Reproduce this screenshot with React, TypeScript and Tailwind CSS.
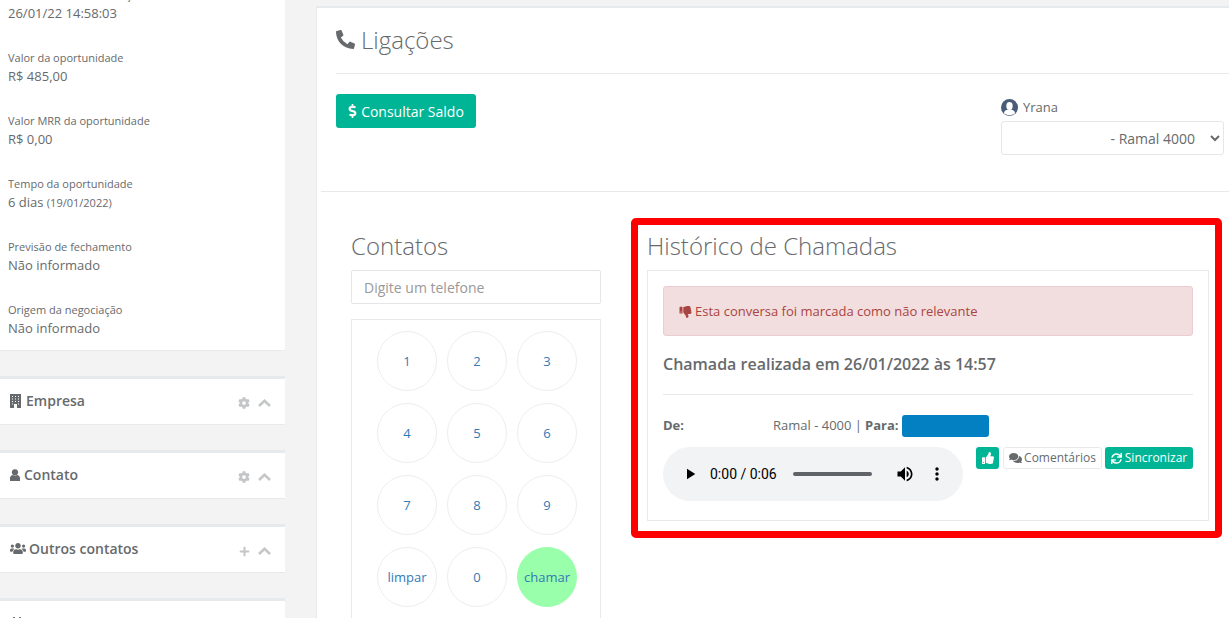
import { FaCalendarAlt, FaCog, FaComments, FaDollarSign, FaPhoneAlt, FaPlus, FaSync, FaThumbsDown, FaThumbsUp, FaUsers } from 'react-icons/fa'
import type { ReactNode } from 'react'

const fields: { label: string; value: ReactNode }[] = [
  { label: 'Data de última atualização', value: '26/01/22 14:58:03' },
  { label: 'Valor da oportunidade', value: 'R$ 485,00' },
  { label: 'Valor MRR da oportunidade', value: 'R$ 0,00' },
  { label: 'Tempo da oportunidade', value: <>6 dias <small className="text-[11px]">(19/01/2022)</small></> },
  { label: 'Previsão de fechamento', value: 'Não informado' },
  { label: 'Origem da negociação', value: 'Não informado' },
]

const keys = ['1', '2', '3', '4', '5', '6', '7', '8', '9', 'limpar', '0', 'chamar']

function BuildingIcon() {
  return (
    <svg className="mr-[1px] h-[14px] w-[11px]" viewBox="0 0 11 14">
      <rect width="11" height="14" fill="#676a6c" />
      <path d="M2 2h1v1H2zM5 2h1v1H5zM8 2h1v1H8zM2 4.500h1v1H2zM5 4.500h1v1H5zM8 4.500h1v1H8zM2 7h1v1H2zM5 7h1v1H5zM8 7h1v1H8zM2 9.500h1v1H2zM8 9.500h1v1H8zM4 10h3v4H4z" fill="#fff" />
    </svg>
  )
}

function BustIcon() {
  return (
    <svg className="h-[12px] w-[10px]" viewBox="0 0 10 12" fill="#676a6c">
      <circle cx="5" cy="3.300" r="3.100" />
      <path d="M0 12V9.200C0 7.400 1.300 6.300 3 6.100c1.200.8 2.800.8 4 0 1.700.2 3 1.300 3 3.100V12z" />
    </svg>
  )
}

function Chevron() {
  return (
    <svg className="h-[8px] w-[13px]" viewBox="0 0 13 8" fill="none" stroke="currentColor" strokeWidth="2.600">
      <path d="M1 7l5.500-5.200L12 7" />
    </svg>
  )
}

function Section({ icon, title, action }: { icon: ReactNode; title?: string; action: ReactNode }) {
  return (
    <section className="mt-[25px] flex h-[49px] items-center justify-between border-t-[3px] border-b border-[#e7eaec] bg-white pl-[10px] pr-[14px]">
      <h5 className="mb-[2px] flex items-center gap-[4px] text-[14px] font-semibold text-[#676a6c]">
        {icon}
        {title}
      </h5>
      <div className="mt-[3px] flex items-center gap-[8px] text-[#c4c6c8]">
        {action}
        <Chevron />
      </div>
    </section>
  )
}

function AudioBar() {
  return (
    <div className="flex h-[54px] w-[300px] shrink-0 items-center rounded-full bg-[#f1f3f4] pl-[18px] text-black">
      <svg className="h-[18px] w-[18px]" viewBox="0 0 24 24" fill="currentColor">
        <path d="M8 5v14l11-7z" />
      </svg>
      <span className="ml-[11px] w-[67px] whitespace-nowrap font-['Roboto',sans-serif] text-[14px] leading-none">0:00 / 0:06</span>
      <div className="ml-[16px] h-[4px] w-[79px] rounded-full bg-[#5f6368]" />
      <svg className="ml-[23px] h-[20px] w-[20px]" viewBox="0 0 24 24" fill="currentColor">
        <path d="M3 9v6h4l5 5V4L7 9H3zm13.5 3c0-1.770-1.020-3.290-2.500-4.030v8.050c1.480-.73 2.500-2.250 2.500-4.020zM14 3.230v2.060c2.890.86 5 3.540 5 6.710s-2.110 5.850-5 6.710v2.060c4.010-.91 7-4.490 7-8.770s-2.990-7.860-7-8.770z" />
      </svg>
      <svg className="ml-[12px] h-[20px] w-[20px]" viewBox="0 0 24 24" fill="currentColor">
        <path d="M12 8c1.100 0 2-.9 2-2s-.9-2-2-2-2 .9-2 2 .9 2 2 2zm0 2c-1.100 0-2 .9-2 2s.9 2 2 2 2-.9 2-2-.9-2-2-2zm0 6c-1.100 0-2 .9-2 2s.9 2 2 2 2-.9 2-2-.9-2-2-2z" />
      </svg>
    </div>
  )
}

export default function App() {
  return (
    <div className="flex h-[618px] w-[1229px] overflow-hidden bg-[#f3f3f4] font-['Open_Sans',sans-serif] text-[13px] text-[#676a6c]">
      {/* Sidebar */}
      <aside className="w-[285px] shrink-0">
        <div className="-mt-[13px] flex flex-col gap-[27px] rounded-br-[3px] border-b border-[#e7eaec] bg-white pb-[12px] pl-[8px]">
          {fields.map((f) => (
            <div key={f.label} className="h-[36px]">
              <div className="text-[11px] leading-[16px]">{f.label}</div>
              <div className="leading-[20px]">{f.value}</div>
            </div>
          ))}
        </div>
        <Section icon={<BuildingIcon />} title="Empresa" action={<FaCog className="h-[12px] w-[12px]" />} />
        <Section icon={<BustIcon />} title="Contato" action={<FaCog className="h-[12px] w-[12px]" />} />
        <Section icon={<FaUsers className="-mr-[1px] h-[13px] w-[16px]" />} title="Outros contatos" action={<FaPlus className="h-[11px] w-[11px]" />} />
        <Section icon={<FaCalendarAlt className="mt-[4px] h-[16px] w-[14px]" />} action={<FaPlus className="h-[11px] w-[11px]" />} />
      </aside>

      {/* Main */}
      <main className="ml-[31px] mt-[6px] min-w-0 flex-1 border-l border-t-2 border-[#e7eaec] bg-white">
        <div className="ml-[19px]">
          <h2 className="flex h-[66px] items-center gap-[6px] border-b border-[#e7eaec] pb-[2px] text-[24px] font-light leading-[36px]">
            <FaPhoneAlt className="mb-[1px] h-[19px] w-[19px] text-[#676a6c]" />
            Ligações
          </h2>
        </div>

        <div className="ml-[4px] flex h-[118px] items-start justify-between border-b border-[#e7eaec] pl-[15px] pr-[5px] pt-[20px]">
          <button className="flex h-[34px] w-[140px] items-center justify-center gap-[4px] rounded-[3px] bg-[#00b595] text-[14px] text-white">
            <FaDollarSign className="h-[14px] w-[9px]" />
            Consultar Saldo
          </button>
          <div className="w-[223px]">
            <label className="flex h-[27px] items-center gap-[5px] text-[13px]">
              <svg className="h-[17px] w-[17px]" viewBox="0 0 17 17">
                <circle cx="8.500" cy="8.500" r="8.500" fill="#4a5d78" />
                <ellipse cx="8.500" cy="7" rx="3.200" ry="4" fill="#fff" />
                <path d="M2.800 14c.6-2 2.500-3 4-3.400h3.400c1.500.4 3.400 1.400 4 3.400-1.400 1.400-3.400 2.200-5.700 2.200S4.200 15.400 2.800 14z" fill="#fff" />
              </svg>
              Yrana
            </label>
            <select className="h-[34px] w-full rounded-[3px] border border-[#e5e6e7] bg-white pr-[12px] text-right text-[14px] text-[#676a6c]">
              <option>- Ramal 4000</option>
            </select>
          </div>
        </div>

        <div className="flex items-start pl-[34px] pt-[26px]">
          {/* Contatos */}
          <div className="mt-[10px] w-[250px] shrink-0">
            <h3 className="text-[24px] font-light leading-[36px]">Contatos</h3>
            <input
              placeholder="Digite um telefone"
              className="mt-[6px] h-[34px] w-full rounded-[2px] border border-[#e5e6e7] px-[12px] text-[14px] placeholder:text-[#999]"
            />
            <div className="mt-[15px] grid grid-cols-[60px_60px_60px] gap-x-[10px] gap-y-[12px] border border-[#e7eaec] pb-[20px] pl-[25px] pt-[11px]">
              {keys.map((k) => (
                <button
                  key={k}
                  className={
                    k === 'chamar'
                      ? 'h-[60px] w-[60px] rounded-full border border-[#99ffaa] bg-[#99ffaa] pt-[2px] text-[13px] text-[#337ab7]'
                      : 'h-[60px] w-[60px] rounded-full border border-[#eeeeee] bg-white pt-[2px] text-[13px] text-[#337ab7]'
                  }
                >
                  {k}
                </button>
              ))}
            </div>
          </div>

          {/* Histórico */}
          <div className="ml-[30px] w-[591px] shrink-0 rounded-[5px] border-[7px] border-[#ff0000] pb-[10px] pl-[9px] pr-[6px] pt-[3px]">
            <h3 className="text-[24px] font-light leading-[36px]">Histórico de Chamadas</h3>
            <div className="mt-[6px] h-[251px] border border-[#e7eaec] p-[15px]">
              <div className="flex h-[50px] items-center gap-[3px] rounded-[3px] border border-[#ebccd1] bg-[#f2dede] pl-[15px] pt-[1px] text-[#a94442]">
                <FaThumbsDown className="h-[12px] w-[13px]" />
                Esta conversa foi marcada como não relevante
              </div>
              <h4 className="mt-[16px] border-b border-[#e7eaec] pb-[18px] text-[16px] font-semibold leading-[24px]">
                Chamada realizada em 26/01/2022 às 14:57
              </h4>
              <div className="mt-[20px] flex h-[22px] items-center">
                <b className="w-[110px]">De:</b>
                <span>Ramal - 4000 | </span>
                <b className="ml-[3px]">Para:</b>
                <span className="ml-[4px] h-[22px] w-[87px] rounded-[3px] bg-[#0280c2]" />
              </div>
              <div className="mt-[10px] flex items-start">
                <AudioBar />
                <div className="ml-[13px] flex h-[22px] items-center text-[12px]">
                  <button className="flex h-[22px] w-[23px] items-center justify-center rounded-[3px] bg-[#00b595] text-white">
                    <FaThumbsUp className="h-[12px] w-[12px]" />
                  </button>
                  <button className="ml-[4px] flex h-[22px] w-[99px] items-center justify-center gap-[2px] rounded-[3px] border border-[#e7eaec] bg-white">
                    <FaComments className="h-[12px] w-[13px]" />
                    Comentários
                  </button>
                  <button className="ml-[3px] flex h-[22px] w-[88px] items-center justify-center gap-[3px] rounded-[3px] bg-[#00b595] text-white">
                    <FaSync className="h-[11px] w-[11px]" />
                    Sincronizar
                  </button>
                </div>
              </div>
            </div>
          </div>
        </div>
      </main>
    </div>
  )
}
